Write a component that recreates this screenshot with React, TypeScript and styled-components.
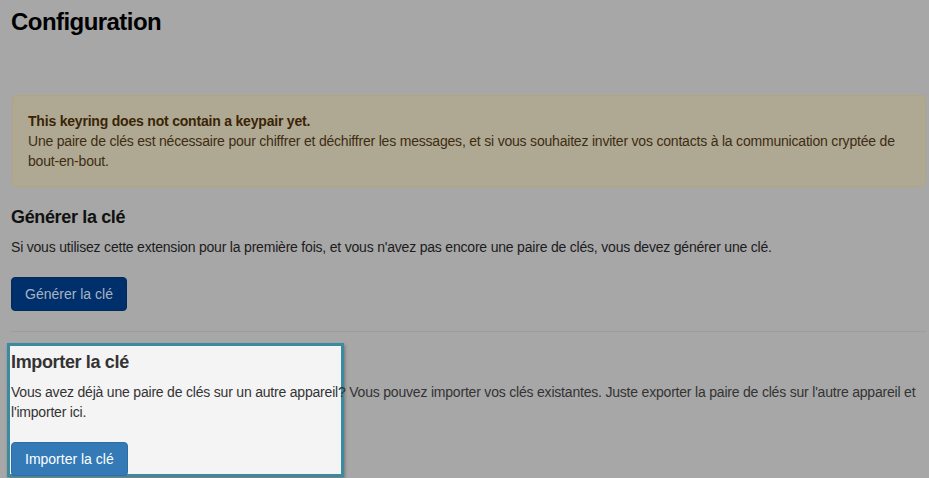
import styled, { createGlobalStyle } from 'styled-components';

const GlobalStyle = createGlobalStyle`
    html, body {
        margin: 0;
        padding: 0;
        background: #a7a7a7;
    }
    body {
        font-family: "Liberation Sans", Helvetica, Arial, sans-serif;
        font-size: 14px;
        line-height: 20px;
        letter-spacing: -0.2px;
        color: #1c1c1c;
        overflow: hidden;
    }
    * {
        box-sizing: border-box;
    }
`

const Page = styled.div`
    width: 929px;
    height: 478px;
    padding: 0 3px 0 11px;
    overflow: hidden;
`

const Title = styled.h1`
    margin: 8px 0 59px;
    font-size: 24px;
    line-height: 28px;
    font-weight: bold;
    color: #000;
    letter-spacing: -0.55px;
`

const Alert = styled.div`
    margin: 0 0 20px 1px;
    padding: 15px;
    background: #afa993;
    border: 1px solid #b2a47f;
    border-radius: 4px;
    color: #3e2c12;
    strong {
        display: block;
        color: #3a2405;
    }
`

const SectionTitle = styled.h4<{ $lit?: boolean }>`
    margin: 0 0 10px;
    font-size: 18px;
    line-height: 20px;
    font-weight: bold;
    letter-spacing: -0.35px;
    color: ${(p) => (p.$lit ? '#333' : '#111')};
`

const Text = styled.p<{ $lit?: boolean }>`
    margin: 0 0 20px;
    color: ${(p) => (p.$lit ? '#333' : '#1c1c1c')};
`

const Button = styled.button<{ $lit?: boolean }>`
    display: inline-block;
    padding: 6px 13px;
    font-family: inherit;
    font-size: 14px;
    line-height: 20px;
    letter-spacing: 0;
    border-radius: 4px;
    border: 1px solid ${(p) => (p.$lit ? '#2e6da4' : '#00295c')};
    background: ${(p) => (p.$lit ? '#337ab7' : '#00306b')};
    color: ${(p) => (p.$lit ? '#fff' : '#a9b3c4')};
    cursor: pointer;
`

const Divider = styled.hr`
    margin: 20px 0;
    border: 0;
    border-top: 1px solid #9d9d9d;
`

const ImportSection = styled.section`
    position: relative;
    z-index: 1;
`

// intro.js-like helper layer behind the highlighted step
const Highlight = styled.div`
    position: absolute;
    left: -4px;
    top: -9px;
    width: 337px;
    height: 134px;
    z-index: -1;
    background: #f4f4f4;
    border: 3px solid #3a8aa0;
    box-shadow: 1px 2px 3px rgba(0, 0, 0, 0.3);
`

export default function App() {
    return (
        <Page>
            <GlobalStyle />
            <Title>Configuration</Title>
            <Alert>
                <strong>This keyring does not contain a keypair yet.</strong>
                Une paire de clés est nécessaire pour chiffrer et déchiffrer les messages, et si vous souhaitez inviter vos contacts à la communication cryptée de bout-en-bout.
            </Alert>
            <SectionTitle>Générer la clé</SectionTitle>
            <Text>Si vous utilisez cette extension pour la première fois, et vous n'avez pas encore une paire de clés, vous devez générer une clé.</Text>
            <Button>Générer la clé</Button>
            <Divider />
            <ImportSection>
                <Highlight />
                <SectionTitle $lit>Importer la clé</SectionTitle>
                <Text $lit>Vous avez déjà une paire de clés sur un autre appareil? Vous pouvez importer vos clés existantes. Juste exporter la paire de clés sur l'autre appareil et l'importer ici.</Text>
                <Button $lit>Importer la clé</Button>
            </ImportSection>
        </Page>
    )
}
